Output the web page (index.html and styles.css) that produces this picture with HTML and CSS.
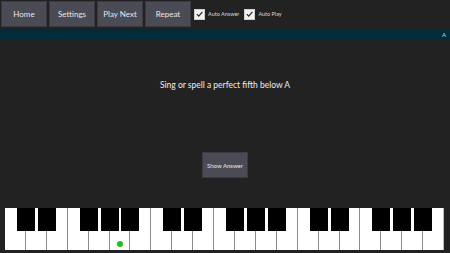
FILE: index.html
```html
<!DOCTYPE html>
<html lang="en">
<head>
  <meta charset="UTF-8">
  <title>Interval Trainer</title>
  <link rel="stylesheet" href="styles.css">
</head>
<body>
  <div class="toolbar">
    <button class="btn">Home</button>
    <button class="btn">Settings</button>
    <button class="btn">Play Next</button>
    <button class="btn">Repeat</button>
    <label class="check"><span class="box"><svg viewBox="0 0 10 10" width="10" height="10"><path d="M2 5.2 L4.2 7.4 L8.2 2.6" fill="none" stroke="#222" stroke-width="1.3"/></svg></span>Auto Answer</label>
    <label class="check"><span class="box"><svg viewBox="0 0 10 10" width="10" height="10"><path d="M2 5.2 L4.2 7.4 L8.2 2.6" fill="none" stroke="#222" stroke-width="1.3"/></svg></span>Auto Play</label>
  </div>
  <div class="status">A</div>

  <div class="main">
    <p class="question">Sing or spell a perfect fifth below A</p>
    <button class="btn answer">Show Answer</button>
  </div>

  <div class="piano">
    <div class="white"><div class="black"></div></div>
    <div class="white"><div class="black"></div></div>
    <div class="white"></div>
    <div class="white"><div class="black"></div></div>
    <div class="white"><div class="black"></div></div>
    <div class="white"><div class="black"></div><span class="dot"></span></div>
    <div class="white"></div>

    <div class="white"><div class="black"></div></div>
    <div class="white"><div class="black"></div></div>
    <div class="white"></div>
    <div class="white"><div class="black"></div></div>
    <div class="white"><div class="black"></div></div>
    <div class="white"><div class="black"></div></div>
    <div class="white"></div>

    <div class="white"><div class="black"></div></div>
    <div class="white"><div class="black"></div></div>
    <div class="white"></div>
    <div class="white"><div class="black"></div></div>
    <div class="white"><div class="black"></div></div>
    <div class="white"><div class="black"></div></div>
    <div class="white"></div>
  </div>
</body>
</html>
```

FILE: styles.css
```css
body { margin: 0; height: 253px; background: #222222; color: #e8e8e8; font-family: Lato, "Open Sans", sans-serif; display: flex; flex-direction: column; overflow: hidden; }

.toolbar { display: flex; align-items: center; gap: 2px; padding: 1px; height: 26px; }
.btn { background: #4b4b56; color: #e6e6e6; border: 1px solid #3a3a42; font-family: inherit; font-size: 8px; padding: 0; }
.toolbar .btn { width: 46px; height: 26px; }

.check { display: flex; align-items: center; font-size: 5.5px; color: #d8d8d8; margin-left: 1px; margin-right: 2px; }
.box { width: 9px; height: 9px; background: #f2f2f2; border: 1px solid #cfcfcf; display: flex; align-items: center; justify-content: center; margin-right: 3px; }
.box svg { display: block; }

.status { height: 11px; margin-top: 1px; background: #002d39; color: #c9d3d6; font-size: 6px; text-align: right; line-height: 11px; padding-right: 4px; }

.main { flex: 1; display: flex; flex-direction: column; align-items: center; }
.question { margin: 39px 0 0; font-size: 8.5px; line-height: 12px; color: #ededed; }
.answer { margin-top: 61px; width: 46px; height: 26px; font-size: 6px; }

.piano { display: flex; margin: 0 6px 3px 5px; height: 42px; background: #fff; }
.white { position: relative; flex: 1; background: #fff; border-right: 1px solid #8a8a8a; }
.white:last-child { border-right: 1px solid #bdbdbd; }
.black { position: absolute; top: 0; right: -10px; width: 18px; height: 23px; background: #000; z-index: 1; }
.dot { position: absolute; left: 7px; bottom: 3px; width: 6px; height: 6px; border-radius: 50%; background: #1fbf1f; }
```
